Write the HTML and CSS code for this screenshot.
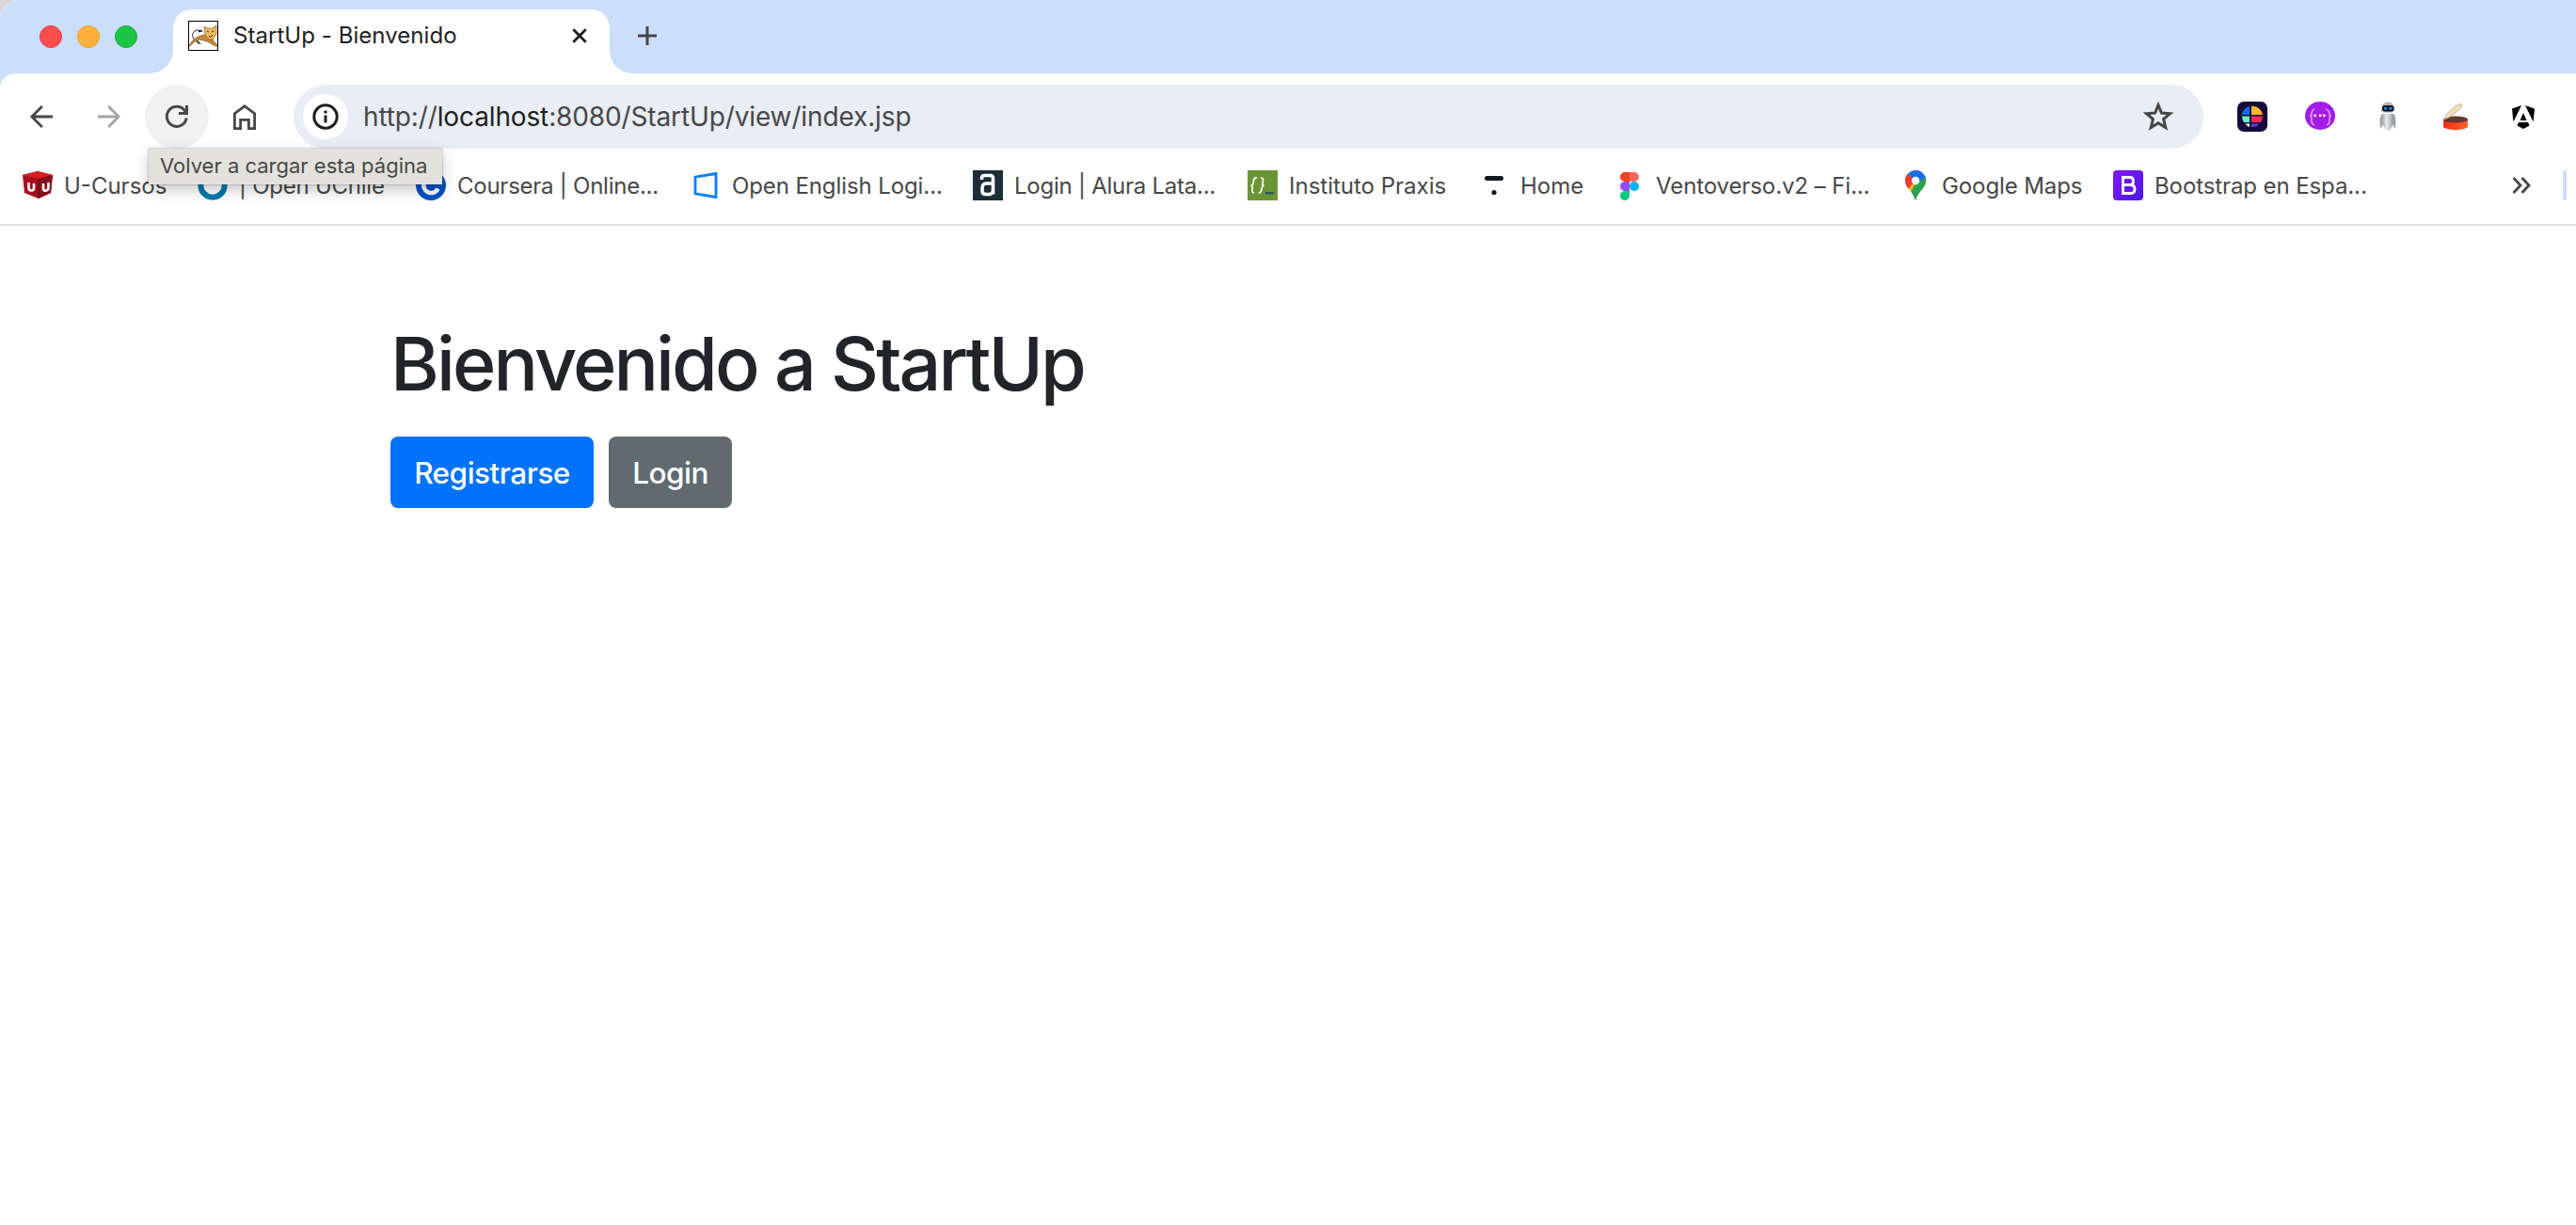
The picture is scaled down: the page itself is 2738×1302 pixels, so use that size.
FILE: index.html
```html
<!DOCTYPE html>
<html lang="es">
<head>
<meta charset="utf-8">
<title>StartUp - Bienvenido</title>
<link rel="stylesheet" href="styles.css">
</head>
<body>
<div class="window">
  <header class="tabstrip">
    <div class="lights"><i class="light red"></i><i class="light amber"></i><i class="light green"></i></div>
    <div class="tab">
      <svg class="favicon" viewBox="0 0 32 32"><rect x=".5" y=".5" width="31" height="31" fill="#fff" stroke="#000"/><path d="M10 22C4 20 3 14 7 11c2-1.500 5-1 8 0" fill="none" stroke="#222" stroke-width="1"/><path d="M11 10l5 1-5 1.500zM9 20l5 5-4-1z" fill="#111"/><path d="M1 27c3-6 6-9 12-11l8-2 4 5 6 7v1h-2l-9-5-8-2-6 3-4 4z" fill="#c68a38" stroke="#6d4a1a" stroke-width=".6"/><path d="M17 6l3 2h6l4-3v9l-4 6h-4l-4-5z" fill="#f3b85c" stroke="#6d4a1a" stroke-width=".6"/><path d="M20 11l2 1M27 11l-2 1M22 16l1.500 1.500L26 15" stroke="#222" stroke-width="1" fill="none"/></svg>
      <span class="tab-title">StartUp - Bienvenido</span>
      <svg class="close" viewBox="0 0 16 16"><path d="M1.300 1.300l13.400 13.400M14.700 1.300L1.300 14.700" stroke="#1f1f1f" stroke-width="2.900"/></svg>
    </div>
    <svg class="plus" viewBox="0 0 20 20"><path d="M10 0v20M0 10h20" stroke="#474747" stroke-width="3"/></svg>
  </header>

  <nav class="toolbar">
    <span class="tool"><svg viewBox="0 0 24 24" fill="none" stroke="#474747" stroke-width="2.800"><path d="M24 12H2.500M12.800 1L1.900 12l10.900 11"/></svg></span>
    <span class="tool"><svg viewBox="0 0 24 24" fill="none" stroke="#a3a3a3" stroke-width="2.800"><path d="M0 12h21.500M11.200 1l10.900 11-10.900 11"/></svg></span>
    <span class="tool active"><svg viewBox="0 0 24 24" fill="none" stroke="#474747" stroke-width="3"><path d="M22.200 13.500A10.500 10.500 0 1 1 19.800 5L22 7.500M22.500 0v8.500H14"/></svg></span>
    <span class="tool"><svg class="home" viewBox="0 0 24 27" fill="none" stroke="#474747" stroke-width="2.800"><path d="M1.400 25.600V9.700L12 1.800l10.600 7.900v15.900h-6.200v-9.200H7.600v9.200z"/></svg></span>
    <div class="omnibox">
      <span class="site-info"><svg viewBox="0 0 28 28"><circle cx="14" cy="14" r="12.200" fill="none" stroke="#1f1f1f" stroke-width="3"/><path d="M14 12.500V20.500M14 7.500v3" stroke="#1f1f1f" stroke-width="3"/></svg></span>
      <span class="url">http://<b>localhost</b>:8080/StartUp/view/index.jsp</span>
      <svg class="star" viewBox="0 0 32 32"><path d="M16 3.500l3.400 8.500 9.200.7-7 5.900 2.200 9L16 22.700l-7.800 4.900 2.200-9-7-5.900 9.200-.7z" fill="none" stroke="#474747" stroke-width="3"/></svg>
    </div>
    <div class="extensions">
      <svg viewBox="0 0 32 32"><rect width="32" height="32" rx="7" fill="#170a3a"/><path d="M13 5v9H5a11 11 0 0 1 8-9z" fill="#0b6bfd"/><path d="M15 4.800A11.200 11.200 0 0 1 27 14H15z" fill="#ffb52e"/><path d="M5 15.500h8V22H7a11 11 0 0 1-2-6.500z" fill="#6bf5b5"/><path d="M15 15.500h12A11 11 0 0 1 25 22H15z" fill="#ff2a5f"/><path d="M8.500 23.500H13V27a11 11 0 0 1-4.500-3.500z" fill="#fff"/><path d="M15 23.500h8.500A11 11 0 0 1 15 27z" fill="#5b42d6"/></svg>
      <svg viewBox="0 0 32 32"><ellipse cx="16" cy="15" rx="16" ry="15" fill="#a51be6"/><path d="M10 8c-3 1-3 3-3 5 0 1-1 2-2 2 1 0 2 1 2 3s-1 6 3 7M22 8c3 1 4 3 4 5 0 1 1 2 2 2-1 0-2 1-2 3s1 6-3 7" fill="none" stroke="#d993f7" stroke-width="1.800"/><path d="M9.500 13.500h2.500v2.500H9.500zM15 13.500h2.500v2.500H15zM19 13.500h2.500v2.500H19z" fill="#fff"/></svg>
      <svg viewBox="0 0 32 32"><defs><linearGradient id="bot"><stop offset="0" stop-color="#9aa3a7"/><stop offset=".4" stop-color="#e9eded"/><stop offset="1" stop-color="#8b9599"/></linearGradient></defs><path d="M10 13c-3 3-3 10-1.500 16l2.500-5zM22 13c3 3 3 10 1.500 16L21 24z" fill="#9aa5a9"/><path d="M10 13h12c1.500 7-1 16-6 18-5-2-7.500-11-6-18z" fill="url(#bot)"/><path d="M9 9.500C9 3 12 .5 16 .5S23 3 23 9.500c0 3-14 3-14 0z" fill="#b2bbbd"/><rect x="10" y="4" width="12.500" height="6.500" rx="3.200" fill="#080b12"/><circle cx="13.500" cy="7.200" r="1.800" fill="#167fe0"/><circle cx="19" cy="7.200" r="1.800" fill="#167fe0"/></svg>
      <svg viewBox="0 0 32 32"><defs><linearGradient id="tin"><stop offset="0" stop-color="#f02c14"/><stop offset="1" stop-color="#ff642d"/></linearGradient></defs><path d="M3 19v8c4 4 22 4 26 0v-8z" fill="url(#tin)"/><ellipse cx="16" cy="19" rx="13" ry="3.600" fill="#65392f"/><path d="M3.500 19C5 13 18 1.500 22.500 2.500c2 2-7 12.500-19 16.500z" fill="#eee0bd" stroke="#b8a987" stroke-width=".8"/></svg>
      <svg viewBox="0 0 32 32"><path d="M14 4L4 7.500l1.400 14zM18 4l10 3.500-1.400 14zM11 22h10l1.500 3.500L16 29l-6.500-3.500zM16 12l3.500 8h-7z" fill="#000"/></svg>
    </div>
  </nav>

  <nav class="bookmarks">
    <a class="mark" style="width:186px"><svg viewBox="0 0 32 32"><path d="M0 5l16-4 16 4-2 19-13 6-15-6z" fill="#a80d1b"/><path d="M0 5l16-4 16 4-15 4z" fill="#d51f22"/><path d="M17 9l15-4-2 19-13 6z" fill="#86101f"/><path d="M17 9v21" stroke="#5c0b16" stroke-width="1"/><path d="M6.500 13v5.500c0 4 5.500 4 5.500.5v-5M22 14v5.500c0 3.500 5.500 2.500 5.500-1v-5.500" fill="none" stroke="#fff" stroke-width="2.600"/></svg><span>U-Cursos</span></a>
    <a class="mark" style="width:232px"><svg viewBox="0 0 32 32"><circle cx="16" cy="16" r="12.700" fill="none" stroke="#0578ad" stroke-width="6"/></svg><span class="snug">| Open UChile</span></a>
    <a class="mark" style="width:292px"><svg viewBox="0 0 32 32"><circle cx="16" cy="16" r="16" fill="#0250c8"/><path d="M23.500 12.500a8 8 0 1 0 0 7" fill="none" stroke="#fff" stroke-width="4.500"/></svg><span class="snug">Coursera | Online...</span></a>
    <a class="mark" style="width:300px"><svg viewBox="0 0 32 32"><path d="M5 7.200L27 3.500v25L5 24.800z" fill="none" stroke="#087eff" stroke-width="2.800"/></svg><span class="close-set">Open English Logi...</span></a>
    <a class="mark" style="width:292px"><svg viewBox="0 0 32 32"><path d="M0 0h32v32H0z" fill="#1c2d35"/><path d="M9.500 10V8q0-2.500 3-2.500h6q3 0 3 3v17M21.500 14H14q-4 0-4 5v3q0 3.500 4 3.500h4q3.500-1 3.500-4" fill="none" stroke="#fff" stroke-width="3.600"/></svg><span class="snug">Login | Alura Lata...</span></a>
    <a class="mark" style="width:246px"><svg viewBox="0 0 32 32"><path d="M0 0h32v32H0z" fill="#6a9537"/><path d="M10 8q-3-.5-3.500 3l-.5 3q-.3 2-2.500 2 2 .5 1.700 2.500L5 21q-.3 3 2 3M14 8q3 0 2.500 3l-.5 3q-.2 2 1.500 2-2 .5-2.300 2.500L14.700 21q-.4 3-3 3" fill="none" stroke="#fff" stroke-width="1.700"/><path d="M19 23h9v2.500h-9z" fill="#285963"/></svg><span>Instituto Praxis</span></a>
    <a class="mark" style="width:144px"><svg viewBox="0 0 32 32"><path d="M8.500 8.500h15" stroke="#0d1925" stroke-width="5" stroke-linecap="round"/><circle cx="16" cy="23.500" r="2.600" fill="#0d1925"/></svg><span>Home</span></a>
    <a class="mark" style="width:304px"><svg viewBox="0 0 32 32"><path d="M16 2h-5a5 5 0 0 0 0 10h5z" fill="#f5401f"/><path d="M16 2h5a5 5 0 0 1 0 10h-5z" fill="#ff665c"/><path d="M16 12h-5a5 5 0 0 0 0 10h5z" fill="#954df8"/><circle cx="21" cy="17" r="5" fill="#00b1fd"/><path d="M16 22h-5a5 5 0 1 0 5 5z" fill="#00ca7e"/></svg><span class="close-set">Ventoverso.v2 – Fi...</span></a>
    <a class="mark" style="width:226px"><svg viewBox="0 0 32 32"><defs><clipPath id="pin"><path d="M16 0A11 11 0 0 0 5 11c0 8 8 10 11 21 3-11 11-13 11-21A11 11 0 0 0 16 0z"/></clipPath></defs><g clip-path="url(#pin)"><path d="M0 0h32v32H0z" fill="#2ca14f"/><path d="M0 2l8 2 8 7L5 24H0z" fill="#ed3a38"/><path d="M16 11L4 24l7 4L27 5l-2-1z" fill="#ffb02e"/><path d="M16 14L28 3v20L16 33l-6-8z" fill="#2ca14f"/><path d="M8 4L16-2l14 6-3 4-9 4z" fill="#1a6be8"/></g><circle cx="16" cy="11" r="4.200" fill="#fff"/></svg><span class="close-set">Google Maps</span></a>
    <a class="mark" style="width:300px"><svg viewBox="0 0 32 32"><defs><linearGradient id="boot" x2="1" y2="1"><stop offset="0" stop-color="#8217ff"/><stop offset="1" stop-color="#4c18e8"/></linearGradient></defs><rect width="32" height="32" rx="4" fill="url(#boot)"/><path d="M10.500 7.500h7q4 0 4 4t-4 4h-7zM10.500 15.500h8q4.500 0 4.500 4.500t-4.500 4.500h-8z" fill="none" stroke="#fff" stroke-width="2.800"/></svg><span class="close-set">Bootstrap en Espa...</span></a>
    <svg class="more" viewBox="0 0 20 18"><path d="M1.500 1l7.500 8-7.500 8M10.500 1l7.500 8-7.500 8" fill="none" stroke="#474747" stroke-width="2.800"/></svg>
    <i class="divider"></i>
  </nav>
  <div class="tooltip">Volver a cargar esta página</div>

  <main class="page">
    <h1>Bienvenido a StartUp</h1>
    <div class="actions"><a class="btn primary">Registrarse</a><a class="btn secondary">Login</a></div>
  </main>
</div>
</body>
</html>
```
FILE: styles.css
```css
* { box-sizing: border-box; }
body { margin: 0; background: #d9d7d4; font-family: Inter, "Liberation Sans", sans-serif; color: #474747; }
svg { display: block; flex: none; overflow: visible; }
.window { position: relative; height: 1302px; overflow: hidden; background: #fff; border-top-left-radius: 20px; white-space: nowrap; }

.tabstrip { display: flex; height: 94px; margin-bottom: -16px; background: #cbdefa; padding: 10px 0 16px 42px; }
.lights { display: flex; gap: 16px; padding-top: 17px; width: 142px; }
.light { width: 24px; height: 24px; border-radius: 50%; }
.red { background: #ff4e50; border: 1px solid #e5383c; }
.amber { background: #ffb13b; border: 1px solid #e69b2c; }
.green { background: #1dc445; border: 1px solid #18ab38; }
.tab { position: relative; display: flex; align-items: center; width: 464px; height: 68px; padding: 0 24px 12px 16px; border-radius: 20px 20px 0 0; background: #fff; }
.tab::before, .tab::after { content: ""; position: absolute; bottom: 0; width: 24px; height: 24px; }
.tab::before { right: 100%; background: radial-gradient(circle at 0 0, transparent 23.5px, #fff 24px); }
.tab::after { left: 100%; background: radial-gradient(circle at 100% 0, transparent 23.5px, #fff 24px); }
.favicon { width: 32px; height: 32px; }
.tab-title { flex: 1; margin-left: 16px; font-size: 24px; line-height: 32px; letter-spacing: .05px; color: #1f1f1f; }
.close { width: 16px; height: 16px; }
.plus { width: 20px; height: 20px; margin: 18px 0 0 30px; }

.toolbar { position: relative; display: flex; align-items: center; height: 92px; padding: 0 28px 0 10px; border-top-left-radius: 16px; background: #fff; }
.tool { display: flex; align-items: center; justify-content: center; width: 68px; height: 68px; margin-right: 4px; border-radius: 50%; }
.tool svg { width: 24px; height: 24px; }
.tool svg.home { height: 27px; }
.active { background: #f1f1f1; }
.omnibox { display: flex; align-items: center; width: 2030px; height: 68px; margin-left: 14px; padding: 0 32px 0 10px; border-radius: 34px; background: #e8edf6; }
.site-info { display: flex; align-items: center; justify-content: center; width: 48px; height: 48px; border-radius: 50%; background: #fff; }
.site-info svg { width: 28px; height: 28px; }
.url { flex: 1; margin-left: 16px; font-size: 28px; line-height: 36px; letter-spacing: -.13px; }
.url b { font-weight: 400; color: #1f1f1f; }
.star { width: 32px; height: 32px; }
.extensions { display: flex; gap: 40px; margin-left: 36px; }
.extensions svg { width: 32px; height: 32px; }

.bookmarks { display: flex; align-items: center; height: 70px; padding: 0 0 14px 24px; border-bottom: 2px solid #dedede; }
.mark { display: flex; align-items: center; gap: 12px; flex: none; font-size: 24px; line-height: 32px; }
.mark span { padding-top: 2px; }
.snug { letter-spacing: -.25px; }
.close-set { letter-spacing: -.1px; }
.mark svg { width: 32px; height: 32px; }
.more { width: 20px; height: 18px; margin-left: 124px; }
.divider { width: 4px; height: 32px; margin-left: 34px; border-radius: 2px; background: #cbdefa; }
.tooltip { position: absolute; left: 158px; top: 158px; width: 312px; height: 38px; padding-left: 12px; background: #e3e1dc; font-size: 22px; line-height: 37px; box-shadow: 0 0 2px rgba(0,0,0,.35), 0 6px 16px rgba(0,0,0,.22); }

.page { padding: 98px 0 0 415px; }
h1 { margin: 0; font-size: 79px; line-height: 96px; font-weight: 500; letter-spacing: -2.9px; color: #212529; }
.actions { display: flex; gap: 16px; margin-top: 30px; }
.btn { display: flex; align-items: center; justify-content: center; width: 216px; height: 76px; border-radius: 8px; color: #fff; font-size: 31.5px; font-weight: 450; letter-spacing: -.5px; }
.primary { background: #0073fa; }
.secondary { width: 131px; background: #606b70; }
```
